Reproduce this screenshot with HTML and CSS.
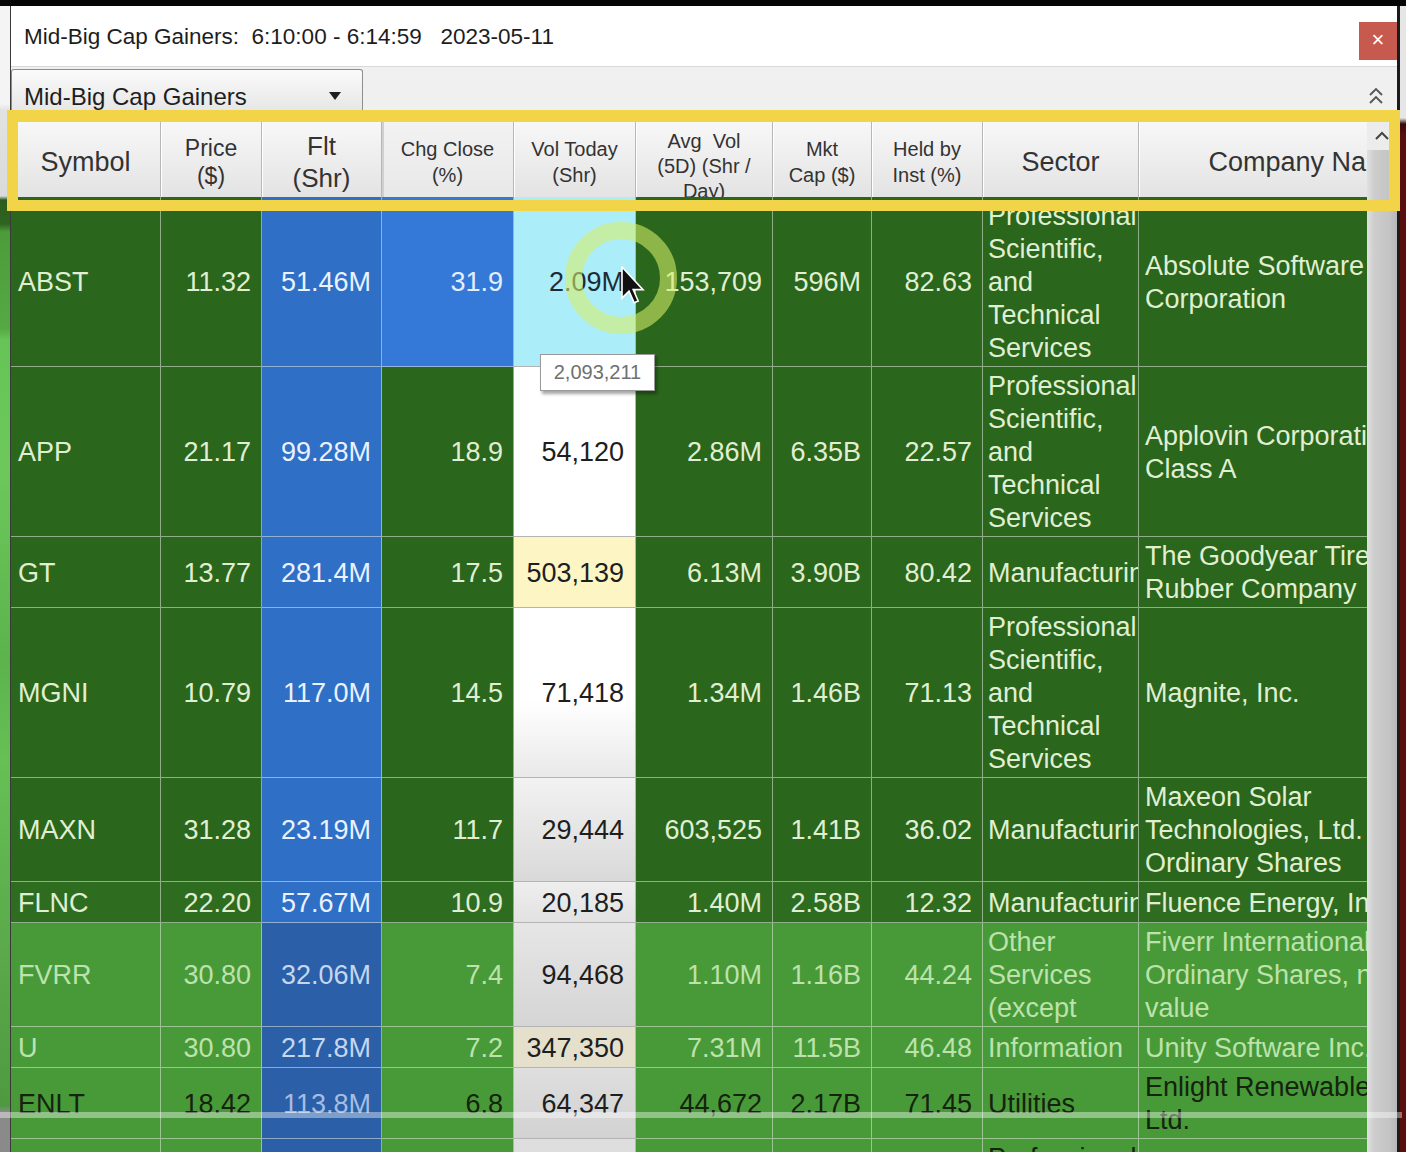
FILE: index.html
```html
<!DOCTYPE html>
<html>
<head>
<meta charset="utf-8">
<link rel="stylesheet" href="styles.css">
</head>
<body>
<div class="topstrip"></div>
<div class="desk">
  <div class="leftstrip"></div>
  <div class="win">
    <div class="titlebar">
      <span class="title">Mid-Big Cap Gainers:  6:10:00 - 6:14:59   2023-05-11</span>
      <div class="close">×</div>
    </div>
    <div class="toolbar">
      <div class="dropdown">
        <span>Mid-Big Cap Gainers</span>
        <svg class="dd-arrow" width="12" height="8" viewBox="0 0 12 8"><path d="M0 0 L12 0 L6 8 Z" fill="#1e1e1e"/></svg>
      </div>
      <svg class="collapse" width="16" height="20" viewBox="0 0 16 20"><path d="M2 9 L8 3 L14 9 M2 17 L8 11 L14 17" fill="none" stroke="#555" stroke-width="1.8"/></svg>
    </div>
    <div class="gridwrap">
      <div class="grid">
        <div class="hrow">
          <div class="hc c1 f27">Symbol</div>
          <div class="hc c2 f24"><span>Price<br>($)</span></div>
          <div class="hc c3 f26"><span>Flt<br>(Shr)</span></div>
          <div class="hc c4 f20 sel"><span>Chg Close<br>(%)</span></div>
          <div class="hc c5 f20"><span>Vol Today<br>(Shr)</span></div>
          <div class="hc c6 f20 avg"><span>Avg&nbsp; Vol<br>(5D) (Shr /<br>Day)</span></div>
          <div class="hc c7 f20"><span>Mkt<br>Cap ($)</span></div>
          <div class="hc c8 f20"><span>Held by<br>Inst (%)</span></div>
          <div class="hc c9 f27">Sector</div>
          <div class="hc c10 f27">Company Name</div>
        </div>

        <div class="row dk">
          <div class="cell c1 l sym">ABST</div>
          <div class="cell c2">11.32</div>
          <div class="cell c3 b">51.46M</div>
          <div class="cell c4 bc">31.9</div>
          <div class="cell c5 v v-cyan">2.09M</div>
          <div class="cell c6">153,709</div>
          <div class="cell c7">596M</div>
          <div class="cell c8">82.63</div>
          <div class="cell c9 l sec"><span>Professional<br>Scientific,<br>and<br>Technical<br>Services</span></div>
          <div class="cell c10 l"><span>Absolute Software<br>Corporation</span></div>
        </div>

        <div class="row dk">
          <div class="cell c1 l sym">APP</div>
          <div class="cell c2">21.17</div>
          <div class="cell c3 b">99.28M</div>
          <div class="cell c4">18.9</div>
          <div class="cell c5 v v-white">54,120</div>
          <div class="cell c6">2.86M</div>
          <div class="cell c7">6.35B</div>
          <div class="cell c8">22.57</div>
          <div class="cell c9 l sec"><span>Professional<br>Scientific,<br>and<br>Technical<br>Services</span></div>
          <div class="cell c10 l"><span>Applovin Corporation<br>Class A</span></div>
        </div>

        <div class="row dk">
          <div class="cell c1 l sym">GT</div>
          <div class="cell c2">13.77</div>
          <div class="cell c3 b">281.4M</div>
          <div class="cell c4">17.5</div>
          <div class="cell c5 v v-yellow">503,139</div>
          <div class="cell c6">6.13M</div>
          <div class="cell c7">3.90B</div>
          <div class="cell c8">80.42</div>
          <div class="cell c9 l sec">Manufacturing</div>
          <div class="cell c10 l"><span>The Goodyear Tire &amp;<br>Rubber Company</span></div>
        </div>

        <div class="row dk">
          <div class="cell c1 l sym">MGNI</div>
          <div class="cell c2">10.79</div>
          <div class="cell c3 b">117.0M</div>
          <div class="cell c4">14.5</div>
          <div class="cell c5 v v-fade">71,418</div>
          <div class="cell c6">1.34M</div>
          <div class="cell c7">1.46B</div>
          <div class="cell c8">71.13</div>
          <div class="cell c9 l sec"><span>Professional<br>Scientific,<br>and<br>Technical<br>Services</span></div>
          <div class="cell c10 l">Magnite, Inc.</div>
        </div>

        <div class="row dk">
          <div class="cell c1 l sym">MAXN</div>
          <div class="cell c2">31.28</div>
          <div class="cell c3 b">23.19M</div>
          <div class="cell c4">11.7</div>
          <div class="cell c5 v v-gray1">29,444</div>
          <div class="cell c6">603,525</div>
          <div class="cell c7">1.41B</div>
          <div class="cell c8">36.02</div>
          <div class="cell c9 l sec">Manufacturing</div>
          <div class="cell c10 l"><span>Maxeon Solar<br>Technologies, Ltd.<br>Ordinary Shares</span></div>
        </div>

        <div class="row dk dk2">
          <div class="cell c1 l sym">FLNC</div>
          <div class="cell c2">22.20</div>
          <div class="cell c3 b">57.67M</div>
          <div class="cell c4">10.9</div>
          <div class="cell c5 v v-gray2">20,185</div>
          <div class="cell c6">1.40M</div>
          <div class="cell c7">2.58B</div>
          <div class="cell c8">12.32</div>
          <div class="cell c9 l sec">Manufacturing</div>
          <div class="cell c10 l">Fluence Energy, Inc.</div>
        </div>

        <div class="row lt">
          <div class="cell c1 l sym">FVRR</div>
          <div class="cell c2">30.80</div>
          <div class="cell c3 b">32.06M</div>
          <div class="cell c4">7.4</div>
          <div class="cell c5 v v-gray3">94,468</div>
          <div class="cell c6">1.10M</div>
          <div class="cell c7">1.16B</div>
          <div class="cell c8">44.24</div>
          <div class="cell c9 l sec"><span>Other<br>Services<br>(except</span></div>
          <div class="cell c10 l"><span>Fiverr International<br>Ordinary Shares, no par<br>value</span></div>
        </div>

        <div class="row lt">
          <div class="cell c1 l sym">U</div>
          <div class="cell c2">30.80</div>
          <div class="cell c3 b">217.8M</div>
          <div class="cell c4">7.2</div>
          <div class="cell c5 v v-beige">347,350</div>
          <div class="cell c6">7.31M</div>
          <div class="cell c7">11.5B</div>
          <div class="cell c8">46.48</div>
          <div class="cell c9 l sec">Information</div>
          <div class="cell c10 l">Unity Software Inc.</div>
        </div>

        <div class="row lt blk">
          <div class="cell c1 l sym">ENLT</div>
          <div class="cell c2">18.42</div>
          <div class="cell c3 b">113.8M</div>
          <div class="cell c4">6.8</div>
          <div class="cell c5 v v-gray4">64,347</div>
          <div class="cell c6">44,672</div>
          <div class="cell c7">2.17B</div>
          <div class="cell c8">71.45</div>
          <div class="cell c9 l sec">Utilities</div>
          <div class="cell c10 l"><span>Enlight Renewable<br>Ltd.</span></div>
        </div>

        <div class="row lt blk">
          <div class="cell c1 l sym"></div>
          <div class="cell c2"></div>
          <div class="cell c3 b"></div>
          <div class="cell c4"></div>
          <div class="cell c5 v v-gray4"></div>
          <div class="cell c6"></div>
          <div class="cell c7"></div>
          <div class="cell c8"></div>
          <div class="cell c9 l sec"><span>Professional<br>Scientific,<br>and<br>Technical<br>Services</span></div>
          <div class="cell c10 l"></div>
        </div>
      </div>
      <div class="scroll">
        <div class="sb-top">
          <svg width="14" height="9" viewBox="0 0 14 9"><path d="M1 8 L7 2 L13 8" fill="none" stroke="#444" stroke-width="2"/></svg>
        </div>
        <div class="sb-thumb"></div>
      </div>
    </div>
  </div>
  <div class="rightstrip"></div>
</div>

<div class="hl"></div>
<div class="ring"></div>
<svg class="cursor" width="24" height="38" viewBox="0 0 12 19"><path d="M0.5 0.5 L0.5 16 L4 12.6 L6.6 18.4 L8.6 17.5 L6.1 11.8 L11 11.8 Z" fill="#111" stroke="#fff" stroke-width="0.8"/></svg>
<div class="tip">2,093,211</div>
<div class="progress"></div>
</body>
</html>
```

FILE: styles.css
```css
* { box-sizing: border-box; }
html, body { margin: 0; padding: 0; }
body {
  width: 1406px;
  height: 1152px;
  overflow: hidden;
  position: relative;
  background: #050505;
  font-family: "Liberation Sans", Arial, sans-serif;
}
.topstrip { height: 6px; background: #050505; }
.desk { display: flex; height: 1146px; }

.leftstrip {
  width: 10px;
  flex: none;
  background: linear-gradient(to bottom,
    #f4f4f4 0, #f4f4f4 98px, #e2e2e2 104px, #dadada 190px,
    #2c5c1d 194px, #2f6420 218px, #4c9d3a 226px, #55a843 322px,
    #66c456 334px, #6cc85b 464px, #5cb34c 654px, #66c055 754px,
    #5aa84a 954px, #4f9a40 1100px, #8a8a8a 1106px, #8a8a8a 1146px);
}
.rightstrip {
  width: 6px;
  flex: none;
  background: linear-gradient(to bottom,
    #e6e6e6 0, #e6e6e6 112px, #3a0a0a 118px, #5a0f0f 130px, #5a0f0f 1146px);
}

.win {
  width: 1390px;
  flex: none;
  border-left: 1px solid #3a3a3a;
  border-right: 3px solid #1b1b1b;
  background: #fff;
  display: flex;
  flex-direction: column;
}

.titlebar {
  height: 60px;
  flex: none;
  display: flex;
  align-items: center;
  padding-left: 13px;
  background: #fff;
}
.title {
  font-size: 22.5px;
  color: #1d1d1d;
  white-space: pre;
  margin-top: 1px;
}
.close {
  margin-left: auto;
  align-self: flex-start;
  margin-top: 16px;
  width: 38px;
  height: 38px;
  background: #c75a4f;
  color: #fff;
  font-size: 22px;
  line-height: 36px;
  text-align: center;
}

.toolbar {
  height: 50px;
  flex: none;
  background: #f0f0f0;
  border-top: 1px solid #d8d8d8;
  display: flex;
  align-items: flex-start;
}
.dropdown {
  margin-top: 2px;
  width: 352px;
  height: 47px;
  border: 1px solid #8e8e8e;
  border-bottom: none;
  border-radius: 3px 3px 0 0;
  background: linear-gradient(#fbfbfb, #e4e4e4);
  display: flex;
  align-items: center;
  padding: 8px 0 0 12px;
  font-size: 24px;
  color: #1e1e1e;
}
.dd-arrow { margin-left: auto; margin-right: 21px; margin-top: -2px; }
.collapse { margin-left: auto; margin-right: 13px; margin-top: 19px; }

.gridwrap {
  display: flex;
  flex: 1;
  overflow: hidden;
  background: #489a38;
}
.grid {
  width: 1356px;
  flex: none;
  overflow: hidden;
}
.hrow, .row { display: flex; width: 1500px; }
.hrow { height: 81px; }

.c1 { width: 150px; }
.c2 { width: 101px; }
.c3 { width: 120px; }
.c4 { width: 132px; }
.c5 { width: 122px; }
.c6 { width: 137px; }
.c7 { width: 99px; }
.c8 { width: 111px; }
.c9 { width: 156px; }
.c10 { width: 335px; }

.hc {
  flex: none;
  height: 81px;
  display: flex;
  align-items: center;
  justify-content: center;
  text-align: center;
  padding-top: 11px;
  background: linear-gradient(#f9f9f9, #e3e3e3);
  border-right: 1px solid #b7b7b7;
  box-shadow: inset 1px 0 0 #ffffff;
  color: #333;
  overflow: hidden;
  white-space: nowrap;
}
.hc.sel { background: linear-gradient(#f3f3f3, #e8e8e8); box-shadow: inset 2px 0 0 #d0d0d0; }
.f27 { font-size: 27px; line-height: 32px; }
.f26 { font-size: 26px; line-height: 32px; }
.f24 { font-size: 23px; line-height: 28px; }
.f20 { font-size: 20px; line-height: 26px; }
.hc.avg { padding-top: 19px; line-height: 25px; }

.row { min-height: 41px; }
.cell {
  flex: none;
  display: flex;
  align-items: center;
  justify-content: flex-end;
  padding: 3px 10px 1px 6px;
  border-right: 1px solid rgba(226, 232, 222, 0.55);
  border-bottom: 1px solid rgba(226, 232, 222, 0.55);
  font-size: 27px;
  line-height: 33px;
  white-space: nowrap;
  overflow: hidden;
}
.cell.l { justify-content: flex-start; }
.cell.sym { padding-left: 7px; }
.cell.sec { padding-left: 5px; }

.dk { background: #2a661b; color: #e0efd4; }
.dk2 { background: #2e6c20; }
.lt { background: #489a38; color: #bde2ad; }
.lt.blk { color: #15230e; }

.cell.b { background: #2f6fc5; color: #eaf1ff; }
.lt .cell.b { background: #2b5fa8; color: #c5d6ef; }
.lt.blk .cell.b { color: #a6bde3; }
.cell.bc { background: #3479d8; color: #e4eeff; }

.cell.v { color: #1e1e1e; border-color: #b4b4b4; padding-right: 11px; }
.v-cyan { background: #abeef9; color: #1f2a35 !important; }
.v-white { background: #ffffff; }
.v-yellow { background: #fdf6c4; }
.v-fade { background: linear-gradient(#ffffff 0%, #ffffff 55%, #e9e9e9 100%); }
.v-gray1 { background: linear-gradient(#f2f2f2, #d9d9d9); }
.v-gray2 { background: linear-gradient(#eeeeee, #e2e2e2); }
.v-gray3 { background: linear-gradient(#e6e6e6, #d5d5d5); }
.v-beige { background: #e4e0cc; }
.v-gray4 { background: linear-gradient(#dedede, #d2d2d2); }

.scroll {
  width: 30px;
  flex: none;
  display: flex;
  flex-direction: column;
  background: #dcdcdc;
}
.sb-top {
  height: 34px;
  flex: none;
  background: #ececec;
  display: flex;
  justify-content: center;
  padding-top: 15px;
}
.sb-thumb {
  flex: 1;
  background: linear-gradient(90deg, #e0e0e0 0, #cdcdcd 25%, #c4c4c4 75%, #b7b7b7 100%);
}

.hl {
  position: absolute;
  left: 7px;
  top: 110px;
  width: 1393px;
  height: 101px;
  border: 11px solid #f2d449;
  border-top-width: 12px;
}
.ring {
  position: absolute;
  left: 565px;
  top: 222px;
  width: 112px;
  height: 112px;
  border-radius: 50%;
  border: 17px solid rgba(214, 238, 104, 0.58);
}
.cursor {
  position: absolute;
  left: 621px;
  top: 266px;
}
.tip {
  position: absolute;
  left: 540px;
  top: 354px;
  width: 115px;
  height: 37px;
  background: #fff;
  border: 1px solid #9a9a9a;
  box-shadow: 2px 3px 3px rgba(0, 0, 0, 0.35);
  font-size: 20px;
  color: #707070;
  display: flex;
  align-items: center;
  justify-content: center;
}
.progress {
  position: absolute;
  left: 0;
  top: 1112px;
  width: 1402px;
  height: 6px;
  background: rgba(255, 255, 255, 0.4);
}
```
